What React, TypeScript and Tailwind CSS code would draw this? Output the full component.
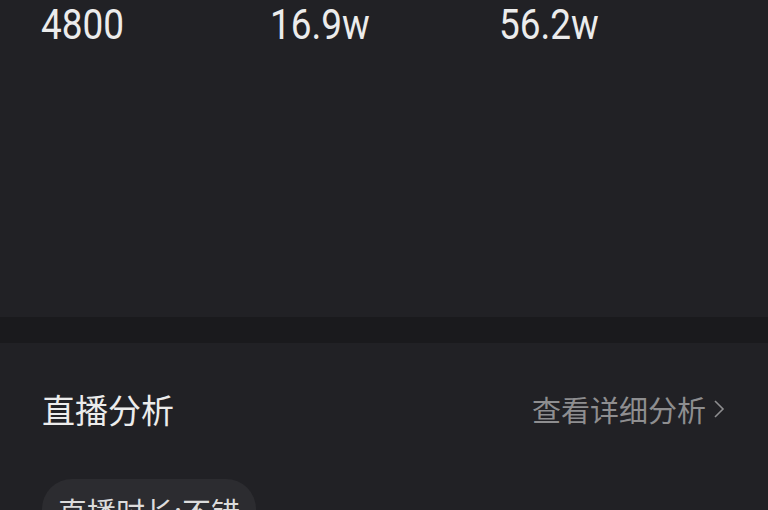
import React from "react";

export default function App() {
  const stats = ["4800", "16.9w", "56.2w"];
  return (
    <div
      className="w-[768px] h-[510px] overflow-hidden bg-[#212125] flex flex-col"
      style={{ fontFamily: 'Roboto, "Noto Sans CJK SC", sans-serif' }}
    >
      <div className="h-[317px] shrink-0 bg-[#212125] pl-[41px] pt-[4px]">
        <div className="flex">
          {stats.map((s) => (
            <div key={s} className="w-[229px]">
              <span className="inline-block origin-left scale-x-[0.88] text-[42px] leading-[42px] text-[#ececec]">
                {s}
              </span>
            </div>
          ))}
        </div>
      </div>
      <div className="h-[26px] shrink-0 bg-[#1a1a1d]" />
      <div className="flex-1 bg-[#212125] px-[42px]">
        <div className="flex items-center justify-between pt-[46px]">
          <div
            className="text-[33px] leading-[40px] text-[#ececec]"
            style={{ fontFamily: '"Noto Sans CJK SC", sans-serif' }}
          >
            直播分析
          </div>
          <div
            className="flex items-center text-[29px] leading-[40px] text-[#8e8e90]"
            style={{ fontFamily: '"Noto Sans CJK SC", sans-serif' }}
          >
            <span>查看详细分析</span>
            <svg width="14" height="22" viewBox="0 0 14 22" className="ml-[6px]">
              <path d="M3 3 L11 11 L3 19" fill="none" stroke="#8e8e90" strokeWidth="1.6" />
            </svg>
          </div>
        </div>
        <div className="mt-[50px] flex">
          <div
            className="rounded-full bg-[#2c2c30] px-[16px] pt-[14px] pb-[10px] text-[29px] leading-[36px] text-[#dcdcdc]"
            style={{ fontFamily: '"Noto Sans CJK SC", sans-serif' }}
          >
            直播时长:不错
          </div>
        </div>
      </div>
    </div>
  );
}
